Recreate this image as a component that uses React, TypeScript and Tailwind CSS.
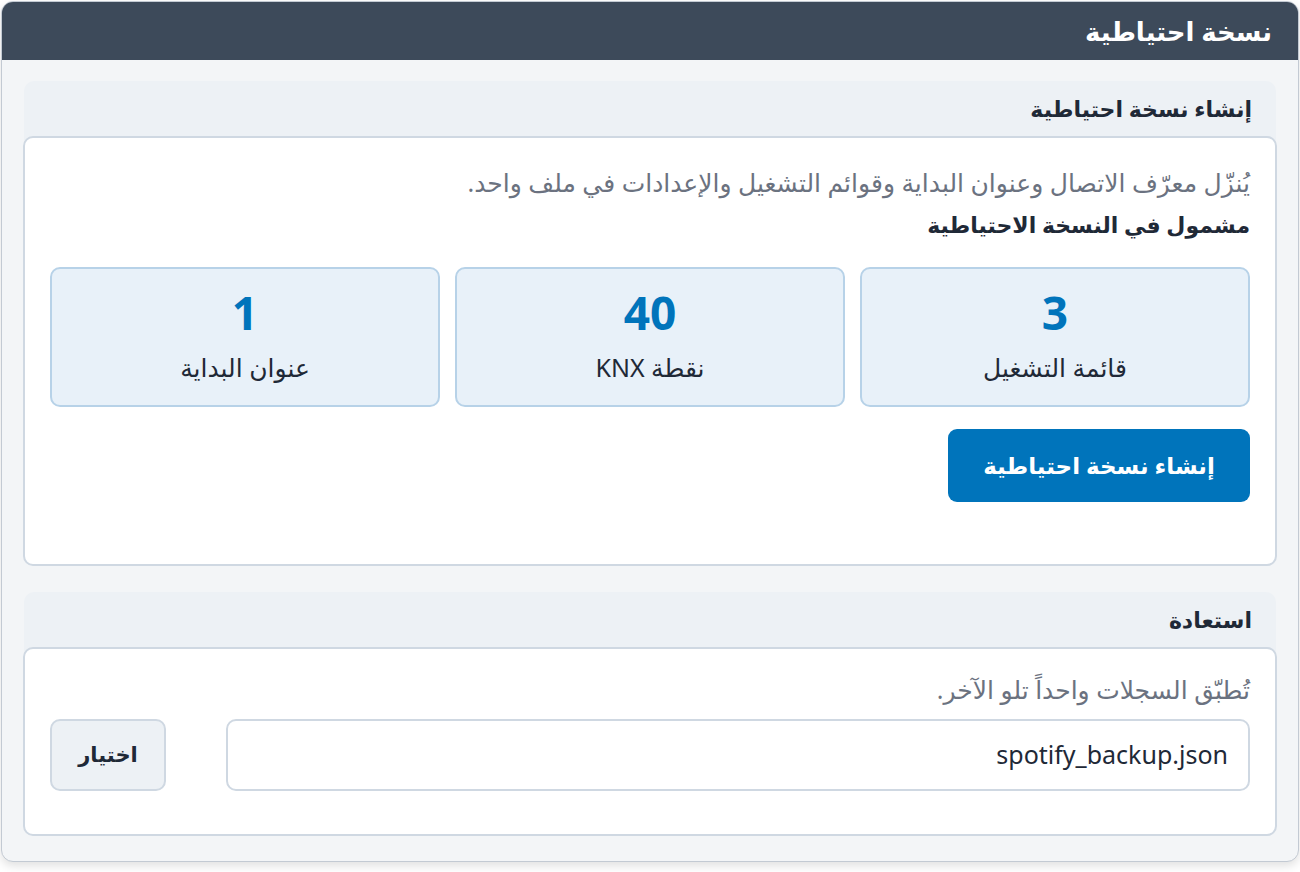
import React from 'react';

const stats = [
  { value: 3, label: 'قائمة التشغيل' },
  { value: 40, label: 'نقطة KNX' },
  { value: 1, label: 'عنوان البداية' },
];

function Section({ title, children }: { title: string; children: React.ReactNode }) {
  return (
    <section className="rounded-[10px] bg-[#edf1f5]">
      <h2 className="px-6 h-[55px] flex items-center text-[22px] font-bold text-[#1f2937]">{title}</h2>
      <div className="bg-white border-2 border-[#cfd8e2] rounded-[10px] -mx-px">{children}</div>
    </section>
  );
}

export default function App() {
  return (
    <div dir="rtl" className="w-[1300px] h-[872px] bg-white p-[1px]" style={{ fontFamily: '"Noto Sans", "DejaVu Sans", sans-serif' }}>
      <div className="rounded-[12px] border border-[#c3cad3] bg-[#f3f5f7] overflow-hidden shadow-[0_4px_10px_rgba(0,0,0,0.12)]">
        {/* header */}
        <div className="h-[58px] bg-[#3d4a5a] px-[26px] flex items-center">
          <h1 className="text-[26px] font-bold text-white">نسخة احتياطية</h1>
        </div>

        <div className="px-[22px] pt-[21px] pb-[25px] flex flex-col gap-[26px]">
          <Section title="إنشاء نسخة احتياطية">
            <div className="px-[25px] pt-[24px] pb-[62px]">
              <p className="text-[25px] text-[#6b7280] leading-[40px]">يُنزّل معرّف الاتصال وعنوان البداية وقوائم التشغيل والإعدادات في ملف واحد.</p>
              <h3 className="text-[22px] font-bold text-[#1f2937] leading-[44px]">مشمول في النسخة الاحتياطية</h3>
              <div className="grid grid-cols-3 gap-[15px] mt-[21px]">
                {stats.map((s) => (
                  <div key={s.label} className="h-[140px] rounded-[10px] border-2 border-[#b7d2e8] bg-[#e8f1f9] flex flex-col items-center justify-center gap-[14px]">
                    <div className="text-[46px] font-bold leading-none text-[#0074bb]">{s.value}</div>
                    <div className="text-[25px] text-[#1f2937] leading-[36px]">{s.label}</div>
                  </div>
                ))}
              </div>
              <button className="mt-[22px] w-[302px] h-[73px] rounded-[9px] bg-[#0074bb] text-white text-[23px] font-bold">
                إنشاء نسخة احتياطية
              </button>
            </div>
          </Section>

          <Section title="استعادة">
            <div className="px-[25px] pt-[20px] pb-[43px]">
              <p className="text-[25px] text-[#6b7280] leading-[40px]">تُطبّق السجلات واحداً تلو الآخر.</p>
              <div className="mt-[10px] flex items-center gap-[60px]">
                <div className="flex-1 h-[72px] rounded-[10px] border-2 border-[#cfd8e2] flex items-center px-[20px] text-[25px] text-[#1f2937]">
                  spotify_backup.json
                </div>
                <button className="w-[116px] h-[72px] rounded-[10px] border-2 border-[#cfd8e2] bg-[#edf1f5] text-[21px] font-bold text-[#1f2937]">
                  اختيار
                </button>
              </div>
            </div>
          </Section>
        </div>
      </div>
    </div>
  );
}
